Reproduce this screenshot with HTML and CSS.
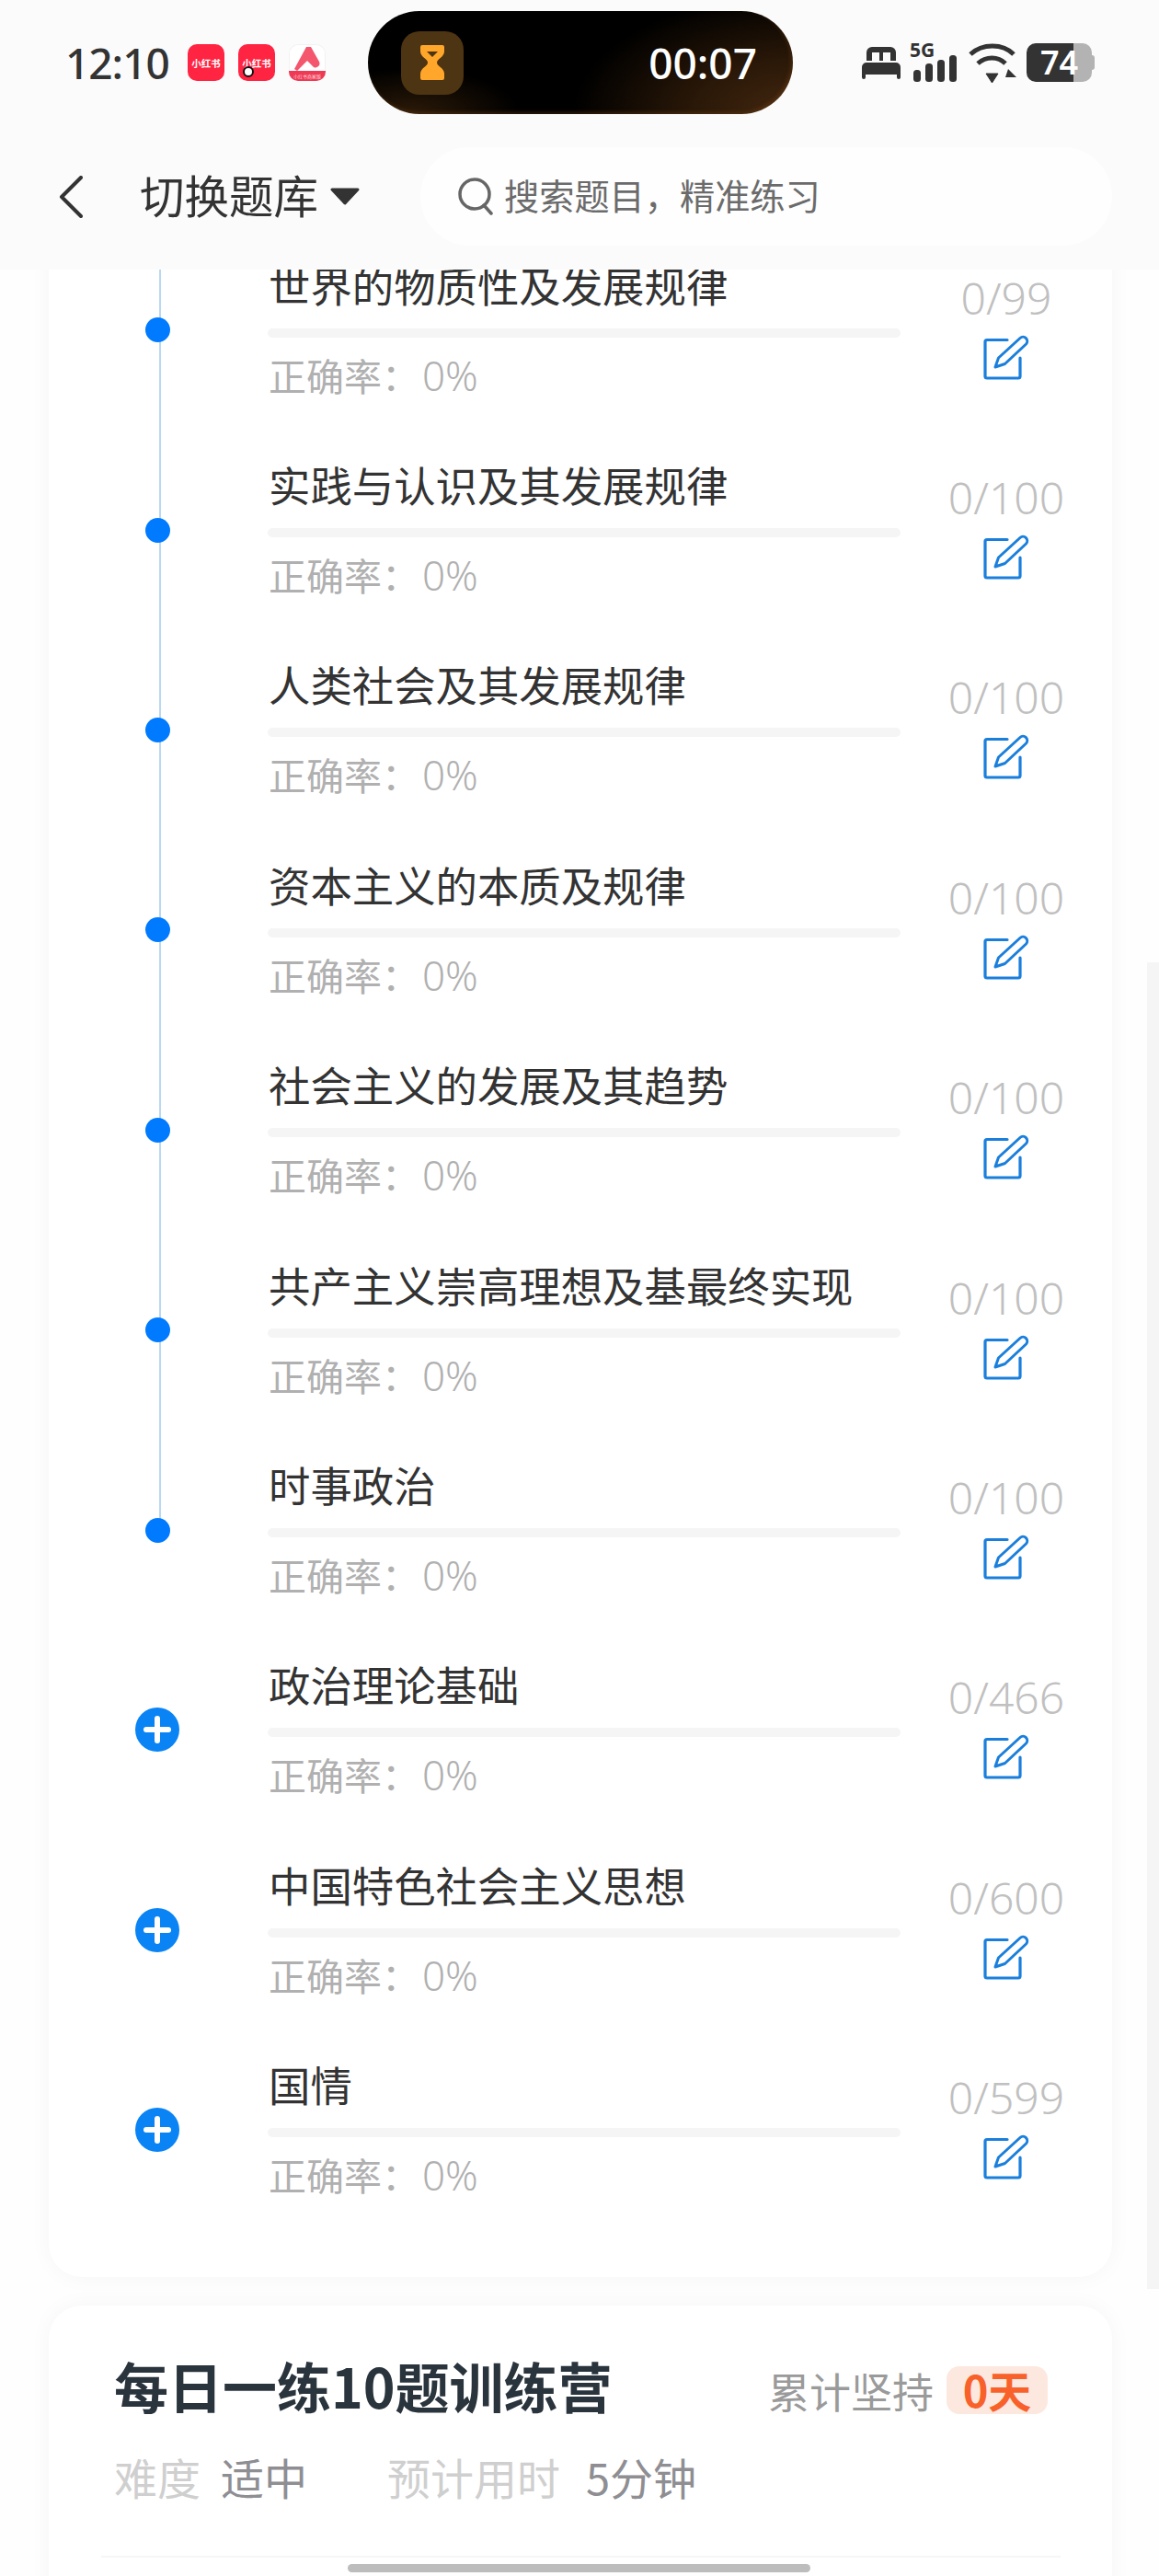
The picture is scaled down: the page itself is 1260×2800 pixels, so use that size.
FILE: index.html
```html
<!DOCTYPE html>
<html lang="zh-CN">
<head>
  <meta charset="UTF-8">
  <meta name="viewport" content="width=device-width, initial-scale=1.0">
  <link rel="stylesheet" href="styles.css">
  <title>切换题库</title>
</head>
<body>
  <svg class="defs" width="0" height="0">
    <symbol id="edit" viewBox="0 0 50 50">
      <path d="M26 5.500H4a2 2 0 0 0-2 2V45a2 2 0 0 0 2 2h34a2 2 0 0 0 2-2V25" fill="none" stroke="#1a7fdc" stroke-width="3.200" stroke-linecap="round"/>
      <path d="M13 35L16.500 25L40 3.500a4.600 4.600 0 0 1 6.500 6.500L23.500 31.500Z" fill="none" stroke="#1a7fdc" stroke-width="3" stroke-linejoin="round"/>
    </symbol>
  </svg>

  <header class="top">
    <div class="status">
      <span class="time">12:10</span>
      <div class="apps">
        <span class="app app-red">小红书</span>
        <span class="app app-red app-dot">小红书</span>
        <span class="app app-white">
          <svg class="app-logo" viewBox="0 0 40 29" width="40" height="29">
            <path d="M19 3H24L33 19a4.500 4.500 0 0 1-6 6L20 18L9 29L6 27Z" fill="#f4566d"/>
          </svg>
          <span class="app-band">小红书商家版</span>
        </span>
      </div>
      <div class="island">
        <span class="timer-tile">
          <svg viewBox="0 0 26 38" width="26" height="38">
            <path d="M2 0H24a2 2 0 0 1 2 2V7C26 13 18 15 18 19C18 23 26 25 26 31V36a2 2 0 0 1-2 2H2a2 2 0 0 1-2-2V31C0 25 8 23 8 19C8 15 0 13 0 7V2a2 2 0 0 1 2-2Z" fill="#ffa62b"/>
            <path d="M7 7H19L13 13Z" fill="#4d3412"/>
          </svg>
        </span>
        <span class="timer-text">00:07</span>
      </div>
      <div class="sys">
        <svg viewBox="0 0 42 35" width="42" height="35">
          <path d="M5 6a6 6 0 0 1 6-6H31a6 6 0 0 1 6 6V15H5Z" fill="#333"/>
          <rect x="11" y="6" width="8" height="9" fill="#fbfbfb"/>
          <rect x="23" y="6" width="8" height="9" fill="#fbfbfb"/>
          <path d="M0 22a5 5 0 0 1 5-5H37a5 5 0 0 1 5 5V33a2 2 0 0 1-4 0V30H4V33a2 2 0 0 1-4 0Z" fill="#333"/>
        </svg>
        <svg class="signal" viewBox="0 0 49 42" width="49" height="42">
          <text x="-2" y="15" class="signal-text">5G</text>
          <rect x="2" y="29" width="8" height="13" rx="3.500" fill="#333"/>
          <rect x="15" y="22" width="8" height="20" rx="3.500" fill="#333"/>
          <rect x="28" y="18" width="8" height="24" rx="3.500" fill="#333"/>
          <rect x="41" y="13" width="8" height="29" rx="3.500" fill="#333"/>
        </svg>
        <svg viewBox="0 0 53 43" width="53" height="43">
          <path d="M3 12C16 0 38 0 50 12" fill="none" stroke="#333" stroke-width="5"/>
          <path d="M11 22C20 14 33 14 41 22" fill="none" stroke="#333" stroke-width="5"/>
          <path d="M20 33L33 33L26.500 43Z" fill="#333" stroke="#333" stroke-linejoin="round" stroke-width="1"/>
          <path d="M44 28L53 37H41Z" fill="#333"/>
        </svg>
        <div class="battery">74</div>
      </div>
    </div>
    <div class="nav">
      <svg class="back" viewBox="0 0 26 46" width="26" height="46">
        <path d="M24 2L3 23L24 44" fill="none" stroke="#333" stroke-width="4" stroke-linecap="round" stroke-linejoin="round"/>
      </svg>
      <span class="nav-title">切换题库</span>
      <svg class="caret" viewBox="0 0 32 19" width="32" height="19">
        <path d="M2 2H30L16 17Z" fill="#333" stroke="#333" stroke-width="3" stroke-linejoin="round"/>
      </svg>
      <div class="search">
        <svg viewBox="0 0 38 41" width="38" height="41">
          <circle cx="18" cy="18" r="16" fill="none" stroke="#666" stroke-width="3.500"/>
          <path d="M28 30L36 39" stroke="#666" stroke-width="3.500" stroke-linecap="round"/>
        </svg>
        <span class="search-text">搜索题目，精准练习</span>
      </div>
    </div>
  </header>

  <div class="scroll-strip"></div>

  <main class="page">
    <section class="card tree">
      <div class="tree-line"></div>

      <div class="row">
        <span class="node"><span class="dot"></span></span>
        <div class="row-main">
          <div class="row-title">世界的物质性及发展规律</div>
          <div class="track"></div>
          <div class="rate">正确率：<span class="rate-num">0%</span></div>
        </div>
        <div class="row-side">
          <span class="count">0/99</span>
          <svg class="edit" width="50" height="50"><use href="#edit"/></svg>
        </div>
      </div>

      <div class="row">
        <span class="node"><span class="dot"></span></span>
        <div class="row-main">
          <div class="row-title">实践与认识及其发展规律</div>
          <div class="track"></div>
          <div class="rate">正确率：<span class="rate-num">0%</span></div>
        </div>
        <div class="row-side">
          <span class="count">0/100</span>
          <svg class="edit" width="50" height="50"><use href="#edit"/></svg>
        </div>
      </div>

      <div class="row">
        <span class="node"><span class="dot"></span></span>
        <div class="row-main">
          <div class="row-title">人类社会及其发展规律</div>
          <div class="track"></div>
          <div class="rate">正确率：<span class="rate-num">0%</span></div>
        </div>
        <div class="row-side">
          <span class="count">0/100</span>
          <svg class="edit" width="50" height="50"><use href="#edit"/></svg>
        </div>
      </div>

      <div class="row">
        <span class="node"><span class="dot"></span></span>
        <div class="row-main">
          <div class="row-title">资本主义的本质及规律</div>
          <div class="track"></div>
          <div class="rate">正确率：<span class="rate-num">0%</span></div>
        </div>
        <div class="row-side">
          <span class="count">0/100</span>
          <svg class="edit" width="50" height="50"><use href="#edit"/></svg>
        </div>
      </div>

      <div class="row">
        <span class="node"><span class="dot"></span></span>
        <div class="row-main">
          <div class="row-title">社会主义的发展及其趋势</div>
          <div class="track"></div>
          <div class="rate">正确率：<span class="rate-num">0%</span></div>
        </div>
        <div class="row-side">
          <span class="count">0/100</span>
          <svg class="edit" width="50" height="50"><use href="#edit"/></svg>
        </div>
      </div>

      <div class="row">
        <span class="node"><span class="dot"></span></span>
        <div class="row-main">
          <div class="row-title">共产主义崇高理想及基最终实现</div>
          <div class="track"></div>
          <div class="rate">正确率：<span class="rate-num">0%</span></div>
        </div>
        <div class="row-side">
          <span class="count">0/100</span>
          <svg class="edit" width="50" height="50"><use href="#edit"/></svg>
        </div>
      </div>

      <div class="row">
        <span class="node"><span class="dot"></span></span>
        <div class="row-main">
          <div class="row-title">时事政治</div>
          <div class="track"></div>
          <div class="rate">正确率：<span class="rate-num">0%</span></div>
        </div>
        <div class="row-side">
          <span class="count">0/100</span>
          <svg class="edit" width="50" height="50"><use href="#edit"/></svg>
        </div>
      </div>

      <div class="row">
        <span class="node"><span class="plus"></span></span>
        <div class="row-main">
          <div class="row-title">政治理论基础</div>
          <div class="track"></div>
          <div class="rate">正确率：<span class="rate-num">0%</span></div>
        </div>
        <div class="row-side">
          <span class="count">0/466</span>
          <svg class="edit" width="50" height="50"><use href="#edit"/></svg>
        </div>
      </div>

      <div class="row">
        <span class="node"><span class="plus"></span></span>
        <div class="row-main">
          <div class="row-title">中国特色社会主义思想</div>
          <div class="track"></div>
          <div class="rate">正确率：<span class="rate-num">0%</span></div>
        </div>
        <div class="row-side">
          <span class="count">0/600</span>
          <svg class="edit" width="50" height="50"><use href="#edit"/></svg>
        </div>
      </div>

      <div class="row">
        <span class="node"><span class="plus"></span></span>
        <div class="row-main">
          <div class="row-title">国情</div>
          <div class="track"></div>
          <div class="rate">正确率：<span class="rate-num">0%</span></div>
        </div>
        <div class="row-side">
          <span class="count">0/599</span>
          <svg class="edit" width="50" height="50"><use href="#edit"/></svg>
        </div>
      </div>
    </section>

    <section class="card camp">
      <div class="camp-head">
        <h2 class="camp-title">每日一练10题训练营</h2>
        <span class="camp-label">累计坚持</span>
        <span class="camp-days">0天</span>
      </div>
      <div class="camp-meta">
        <span class="meta-key">难度</span>
        <span class="meta-val">适中</span>
        <span class="meta-key meta-gap">预计用时</span>
        <span class="meta-val meta-time">5分钟</span>
      </div>
      <div class="camp-line"></div>
    </section>
  </main>

  <div class="home-bar"></div>
</body>
</html>
```

FILE: styles.css
```css
* {
  box-sizing: border-box;
}

html,
body {
  margin: 0;
  height: 2800px;
  overflow: hidden;
}

body {
  position: relative;
  font-family: "Noto Sans CJK SC", "Noto Sans", sans-serif;
  background-color: #fefefe;
  color: #333;
}

.defs {
  position: absolute;
}

/* top bar, sits over the scrolled list */
.top {
  position: absolute;
  top: 0;
  left: 0;
  right: 0;
  height: 293px;
  padding-top: 12px;
  background-color: #fbfbfb;
  z-index: 2;
}

.status {
  display: flex;
  align-items: center;
  height: 112px;
  padding-left: 71px;
}

.time {
  width: 111px;
  font-family: "Noto Sans", sans-serif;
  font-size: 46px;
  font-weight: 500;
  letter-spacing: -1px;
  white-space: nowrap;
}

.apps {
  display: flex;
  gap: 15px;
  margin-left: 22px;
}

.app {
  display: flex;
  align-items: center;
  justify-content: center;
  position: relative;
  width: 40px;
  height: 40px;
  border-radius: 10px;
  overflow: hidden;
  font-size: 10.5px;
  font-weight: 700;
  white-space: nowrap;
}

.app-red {
  background-color: #ff2442;
  color: #fff;
}

.app-dot::after {
  content: "";
  position: absolute;
  left: 5px;
  bottom: 4px;
  width: 8px;
  height: 8px;
  border: 2px solid #111;
  border-radius: 50%;
  background-color: #fff;
}

.app-white {
  flex-direction: column;
  justify-content: flex-start;
  background-color: #fff;
  box-shadow: inset 0 0 0 1px #f2f2f2;
}

.app-logo {
  flex: none;
}

.app-band {
  flex: none;
  width: 40px;
  height: 11px;
  line-height: 11px;
  background-color: #ee3a55;
  color: #ffd9de;
  font-size: 5px;
  font-weight: 400;
  text-align: center;
}

.island {
  display: flex;
  align-items: center;
  width: 462px;
  height: 112px;
  margin-left: 46px;
  padding: 0 39px 0 36px;
  border-radius: 56px;
  background:
    radial-gradient(ellipse 240px 130px at 100% 100%, #43270f 0, #2a1808 45%, rgba(0, 0, 0, 0) 100%),
    radial-gradient(ellipse 120px 50px at 10% 100%, #2c1a08 0, rgba(0, 0, 0, 0) 100%),
    #000;
  box-shadow: inset -2px -2px 4px rgba(110, 65, 25, 0.45);
}

.timer-tile {
  display: flex;
  align-items: center;
  justify-content: center;
  width: 68px;
  height: 69px;
  border-radius: 20px;
  background-color: #4d3412;
}

.timer-text {
  margin-left: auto;
  color: #fff;
  font-family: "Noto Sans", sans-serif;
  font-size: 46px;
  font-weight: 500;
}

.sys {
  display: flex;
  align-items: center;
  gap: 12px;
  margin-left: 75px;
}

.signal-text {
  font-family: "Noto Sans", sans-serif;
  font-size: 21px;
  font-weight: 700;
  fill: #333;
}

.signal {
  overflow: visible;
}

.battery {
  position: relative;
  width: 71px;
  height: 42px;
  margin-left: -1px;
  padding-left: 15px;
  border-radius: 10px;
  background: linear-gradient(90deg, #333 51px, #b3b3b3 51px);
  color: #fff;
  font-family: "Noto Sans", sans-serif;
  font-size: 36px;
  font-weight: 600;
  line-height: 42px;
}

.battery::after {
  content: "";
  position: absolute;
  top: 13px;
  right: -3px;
  width: 3px;
  height: 16px;
  border-radius: 0 3px 3px 0;
  background-color: #b3b3b3;
}

.nav {
  display: flex;
  align-items: center;
  height: 107px;
  margin-top: 36px;
  padding-left: 64px;
}

.back {
  flex: none;
}

.nav-title {
  margin-left: 62px;
  margin-bottom: 5px;
  font-size: 48.5px;
  line-height: 60px;
  white-space: nowrap;
}

.caret {
  margin-left: 13px;
}

.search {
  display: flex;
  align-items: center;
  width: 752px;
  height: 107px;
  margin-left: 66px;
  padding-left: 41px;
  border-radius: 54px;
  background-color: #fefefe;
}

.search-text {
  margin-left: 12px;
  margin-bottom: 5px;
  color: #6b6b6b;
  font-size: 38.2px;
  white-space: nowrap;
}

/* list */
.page {
  padding: 200px 51px 0 53px;
}

.card {
  border-radius: 36px;
  background-color: #fff;
  box-shadow: 0 0 24px rgba(0, 0, 0, 0.04);
}

.tree {
  position: relative;
  height: 2275px;
  padding-top: 50px;
}

.tree-line {
  position: absolute;
  top: 0;
  left: 120px;
  width: 2px;
  height: 1463px;
  background-color: #b9d9f2;
}

.row {
  display: flex;
  align-items: center;
  height: 217.4px;
}

.node {
  display: flex;
  align-items: center;
  justify-content: center;
  position: relative;
  flex: none;
  width: 236px;
}

.dot {
  width: 27px;
  height: 27px;
  border-radius: 50%;
  background-color: #007aff;
}

.plus {
  position: relative;
  width: 48px;
  height: 48px;
  border-radius: 50%;
  background-color: #0a84f5;
}

.plus::before,
.plus::after {
  content: "";
  position: absolute;
  border-radius: 3px;
  background-color: #fff;
}

.plus::before {
  top: 21px;
  left: 9px;
  width: 30px;
  height: 6px;
}

.plus::after {
  top: 9px;
  left: 21px;
  width: 6px;
  height: 30px;
}

.row-main {
  flex: none;
  width: 688px;
  margin-left: 2px;
}

.row-title {
  height: 60px;
  padding-left: 1px;
  font-size: 45.4px;
  line-height: 57px;
  white-space: nowrap;
}

.track {
  height: 10px;
  margin-top: 16px;
  border-radius: 5px;
  background-color: #f5f5f5;
}

.rate {
  height: 56px;
  margin-top: 14px;
  padding-left: 1px;
  color: #b0b0b0;
  font-size: 41px;
  line-height: 52px;
}

.rate-num {
  margin-left: 3px;
  font-family: "Noto Sans", sans-serif;
  font-size: 44px;
  font-weight: 300;
}

.row-side {
  display: flex;
  flex-direction: column;
  align-items: center;
  width: 230px;
  padding-bottom: 6px;
}

.count {
  height: 56px;
  color: #c0c0c0;
  font-family: "Noto Sans", sans-serif;
  font-size: 48px;
  font-weight: 300;
  line-height: 52px;
}

.edit {
  margin-top: 10px;
}

.camp {
  height: 400px;
  margin-top: 31px;
  padding: 54px 70px 0 71px;
}

.camp-head {
  display: flex;
  align-items: center;
  height: 76px;
}

.camp-title {
  flex: 1;
  margin: 0 0 10px;
  color: #2a343c;
  font-size: 59px;
  font-weight: 700;
  line-height: 66px;
  white-space: nowrap;
}

.camp-label {
  color: #9a9a9a;
  font-size: 45px;
}

.camp-days {
  width: 110px;
  height: 52px;
  margin-left: 14px;
  border-radius: 14px;
  background-color: #fde8df;
  color: #f8622a;
  font-size: 47px;
  font-weight: 700;
  line-height: 50px;
  text-align: center;
}

.camp-meta {
  display: flex;
  align-items: center;
  margin-top: 26px;
  font-size: 47px;
  line-height: 60px;
}

.meta-key {
  color: #cfcfcf;
}

.meta-val {
  margin-left: 22px;
  color: #8e8e93;
}

.meta-gap {
  margin-left: 87px;
}

.meta-time {
  margin-left: 28px;
}

.camp-line {
  width: 1043px;
  height: 2px;
  margin: 56px 0 0 -14px;
  background-color: #f6f6f6;
}

/* thin overlay strips */
.scroll-strip {
  position: absolute;
  top: 1046px;
  right: 0;
  width: 13px;
  height: 1442px;
  background-color: #f5f5f5;
}

.home-bar {
  position: absolute;
  left: 378px;
  bottom: 4px;
  width: 503px;
  height: 9px;
  border-radius: 5px;
  background-color: #bdbdbd;
  z-index: 3;
}
```
